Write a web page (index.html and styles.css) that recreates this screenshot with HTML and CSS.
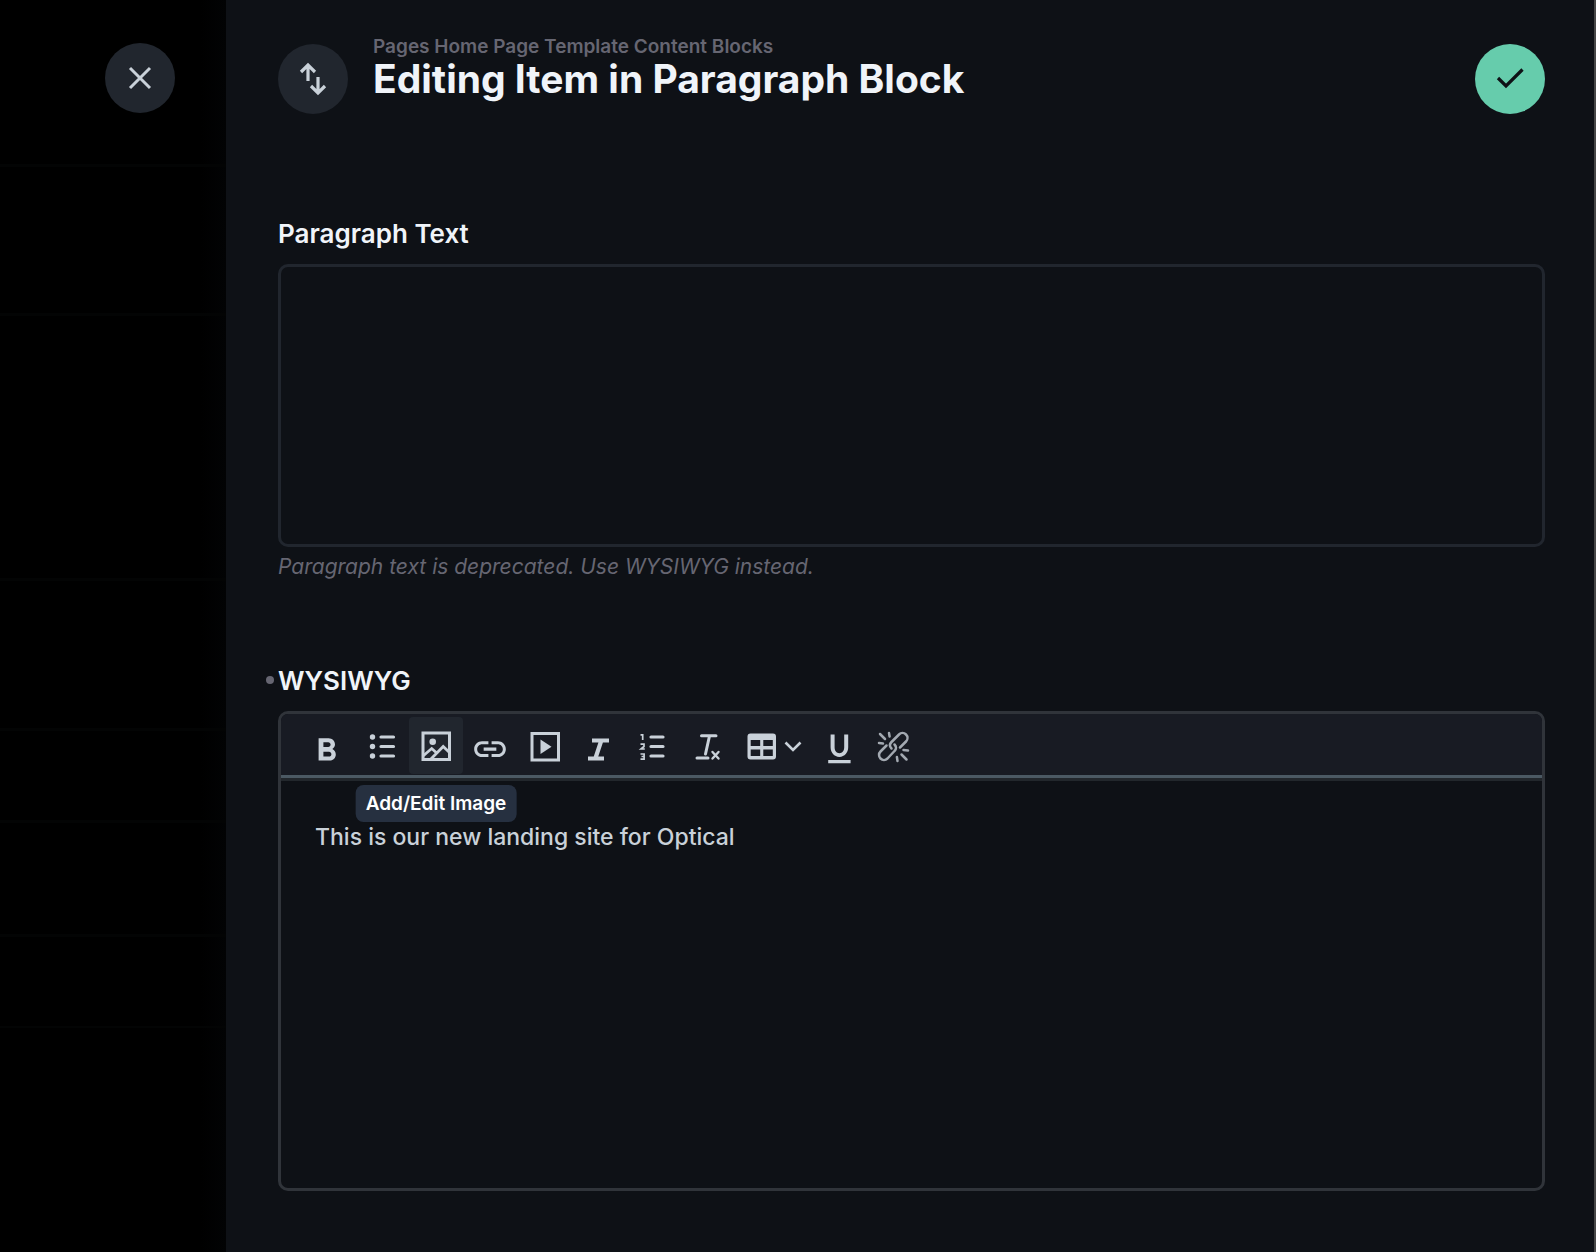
FILE: index.html
```html
<!DOCTYPE html>
<html lang="en">
<head>
<meta charset="utf-8">
<title>Editing Item in Paragraph Block</title>
<link rel="stylesheet" href="styles.css">
</head>
<body>
<div class="app">
  <aside class="backdrop">
    <button class="round" type="button" aria-label="Close">
      <svg width="36" height="36" viewBox="0 0 36 36" fill="none" stroke="currentColor" stroke-width="3"><path d="M8 8l20 20M28 8L8 28"/></svg>
    </button>
    <div class="rows">
      <div class="row row-1"></div>
      <div class="row row-2"></div>
      <div class="row row-3"></div>
      <div class="row row-4"></div>
      <div class="row row-5"></div>
      <div class="row row-6"></div>
    </div>
  </aside>
  <main class="drawer">
    <header class="header">
      <button class="round" type="button" aria-label="Import and export">
        <svg width="36" height="36" viewBox="0 0 36 36" fill="none" stroke="currentColor" stroke-width="3.200"><path d="M13 20V4.500M6 11l7-7 7 7M23 16v15.500M16 25l7 7 7-7"/></svg>
      </button>
      <div class="titles">
        <p class="crumbs">Pages Home Page Template Content Blocks</p>
        <h1 class="title">Editing Item in Paragraph Block</h1>
      </div>
      <button class="round save" type="button" aria-label="Save">
        <svg width="36" height="36" viewBox="0 0 36 36" fill="none" stroke="currentColor" stroke-width="3.200"><path d="M6 17l8 8L30.500 8.500"/></svg>
      </button>
    </header>
    <form class="form">
      <div class="field">
        <label class="label" for="paragraph">Paragraph Text</label>
        <textarea class="textarea" id="paragraph"></textarea>
        <p class="hint">Paragraph text is deprecated. Use WYSIWYG instead.</p>
      </div>
      <div class="field">
        <label class="label edited" for="wysiwyg">WYSIWYG</label>
        <div class="editor">
          <div class="toolbar">
            <button class="tool" type="button" aria-label="Bold"><svg width="36" height="36" viewBox="0 0 36 36" fill="currentColor"><path transform="translate(-2.600 2.200) scale(1.600)" d="M15.600 11.790c.97-.67 1.650-1.770 1.650-2.790 0-2.260-1.750-4-4-4H7v14h7.040c2.090 0 3.710-1.700 3.710-3.790 0-1.520-.86-2.820-2.150-3.420zM10 7.500h3c.83 0 1.500.67 1.500 1.500s-.67 1.500-1.500 1.500h-3v-3zm3.500 9H10v-3h3.500c.83 0 1.500.67 1.500 1.500s-.67 1.500-1.500 1.500z"/></svg></button>
            <button class="tool" type="button" aria-label="Bullet list"><svg width="36" height="36" viewBox="0 0 36 36" fill="currentColor"><circle cx="8.500" cy="9" r="2.700"/><circle cx="8.500" cy="18.500" r="2.700"/><circle cx="8.500" cy="28" r="2.700"/><path d="M17 9h12.500M17 18.500h12.500M17 28h12.500" stroke="currentColor" stroke-width="3.200" stroke-linecap="round"/></svg></button>
            <button class="tool active" type="button" aria-label="Add/Edit Image"><svg width="36" height="36" viewBox="0 0 36 36" fill="none" stroke="currentColor" stroke-width="3"><path d="M5 5h26.500v26.500H5z"/><path d="M5 28l8.700-7.500 5 4.500M12 32l13.200-13.500L32 25" stroke-width="2.800"/><circle cx="14.700" cy="13.800" r="3.300" fill="currentColor" stroke="none"/></svg><span class="tooltip" role="tooltip">Add/Edit Image</span></button>
            <button class="tool" type="button" aria-label="Link"><svg width="38" height="38" viewBox="0 -2 24 24" fill="currentColor"><path d="M3.900 12c0-1.710 1.390-3.100 3.100-3.100h4V7H7c-2.760 0-5 2.240-5 5s2.240 5 5 5h4v-1.900H7c-1.710 0-3.100-1.390-3.100-3.100zM8 13h8v-2H8v2zm9-6h-4v1.900h4c1.710 0 3.100 1.390 3.100 3.100s-1.390 3.100-3.100 3.100h-4V17h4c2.760 0 5-2.240 5-5s-2.240-5-5-5z"/></svg></button>
            <button class="tool" type="button" aria-label="Media"><svg width="36" height="36" viewBox="0 0 36 36" fill="none" stroke="currentColor" stroke-width="3"><path d="M6 5.500h26.500V32H6z"/><path d="M14.500 11.500l11 7.250-11 7.250z" fill="currentColor" stroke="none"/></svg></button>
            <button class="tool" type="button" aria-label="Italic"><svg width="36" height="36" viewBox="0 0 36 36" fill="none" stroke="currentColor" stroke-width="4.200"><path d="M12 12.500h17M8 30.500h16M21.500 12l-6 18"/></svg></button>
            <button class="tool" type="button" aria-label="Numbered list"><svg width="36" height="36" viewBox="0 0 36 36" fill="none" stroke="currentColor"><path d="M17 9h12M17 18.500h12M17 28h12" stroke-width="3.200" stroke-linecap="round"/><path d="M6.500 6.800h2.200V12M6.500 16.200H10v2.300L7 21h3.800M6.500 26h3.600v5.200H6.500M7.500 28.500H10" stroke-width="1.700"/></svg></button>
            <button class="tool" type="button" aria-label="Clear formatting"><svg width="36" height="36" viewBox="0 0 36 36" fill="none" stroke="currentColor" stroke-linecap="round"><path d="M13.500 7.700h14.500M21.500 8l-4 18M9 30h11" stroke-width="3"/><path d="M24.500 24l6 6.500M30.500 24l-6 6.500" stroke-width="2.400"/></svg></button>
            <button class="tool wide" type="button" aria-label="Table"><svg width="36" height="36" viewBox="0 0 36 36" fill="currentColor" fill-rule="evenodd"><path d="M7.500 5.500h22.500a3 3 0 0 1 3 3v20a3 3 0 0 1-3 3h-22.500a3 3 0 0 1-3-3v-20a3 3 0 0 1 3-3zM7.700 12v6h9.500v-6zM20.300 12v6h9.500v-6zM7.700 21.500V28h9.500v-6.500zM20.300 21.500V28h9.500v-6.500z"/></svg><svg width="20" height="20" viewBox="0 0 20 20" fill="none" stroke="currentColor" stroke-width="2.600"><path d="M2.500 6.500L10 14l7.500-7.500"/></svg></button>
            <button class="tool" type="button" aria-label="Underline"><svg width="36" height="36" viewBox="0 0 36 36" fill="currentColor"><path transform="translate(-.8 1.700) scale(1.600)" d="M12 17c3.310 0 5.500-2.690 5.500-6V3H15v8c0 2.200-1.200 3.700-3 3.700S9 13.200 9 11V3H6.500v8c0 3.310 2.190 6 5.500 6zm-7 2v2h14v-2H5z"/></svg></button>
            <button class="tool dim" type="button" aria-label="Remove link"><svg width="36" height="36" viewBox="0 0 36 36" fill="none" stroke="currentColor" stroke-width="2.500" stroke-linecap="round"><path d="M16.500 20.500c-2-2-2-4.500 0-6.500l7.500-7.500a4.900 4.900 0 0 1 7 7L25 19.500M19.500 16.500c2 2 2 4.500 0 6.500L12.500 30.500a4.900 4.900 0 0 1-7-7L11.500 17.500"/><path d="M5 6l5 5M14 5l.6 3.500M4 15l4 .6M31.500 31.500l-5-5M22.500 33l-.6-4M33 22.500l-4.500-.6"/></svg></button>
          </div>
          <textarea class="body" id="wysiwyg">This is our new landing site for Optical</textarea>
        </div>
      </div>
    </form>
  </main>
</div>
</body>
</html>
```
FILE: styles.css
```css
* {
  box-sizing: border-box;
}

body {
  margin: 0;
  background: #0e1116;
  font-family: Inter, "Liberation Sans", sans-serif;
  color: #f0f4f9;
}

svg {
  display: block;
  flex: none;
}

.app {
  display: grid;
  grid-template-columns: 226px 1fr;
  min-height: 100vh;
}

.backdrop {
  display: flex;
  flex-direction: column;
  background: linear-gradient(to left, #020304, #000 26px);
}

.backdrop .round {
  margin: 43px 51px 0 auto;
}

.rows {
  margin-top: 51px;
}

.row {
  border-top: 3px solid #030404;
}

.row-1 {
  height: 149px;
}

.row-2 {
  height: 265px;
}

.row-3 {
  height: 150px;
}

.row-4 {
  height: 92px;
}

.row-5 {
  height: 114px;
}

.row-6 {
  height: 94px;
  border-bottom: 2px solid #030404;
}

.drawer {
  padding: 36px 49px 61px 52px;
  border-right: 2px solid #464646;
}

.round {
  display: flex;
  flex: none;
  align-items: center;
  justify-content: center;
  width: 70px;
  height: 70px;
  padding: 0;
  border: 0;
  border-radius: 50%;
  background: #21262e;
  color: #c9d1d9;
}

.header {
  display: flex;
  gap: 25px;
}

.header .round {
  margin-top: 8px;
}

.header .save {
  margin-left: auto;
  background: #66ccac;
  color: #0e1116;
}

.crumbs {
  margin: 0;
  font-size: 19px;
  font-weight: 600;
  line-height: 22px;
  color: #666672;
}

.title {
  margin: 0;
  font-size: 39px;
  font-weight: 700;
  line-height: 42px;
}

.form {
  display: grid;
  gap: 84px;
  margin-top: 104px;
}

.field {
  display: flex;
  flex-direction: column;
}

.label {
  margin-bottom: 14px;
  font-size: 26px;
  font-weight: 600;
  line-height: 32px;
}

.edited {
  position: relative;
}

.edited::before {
  content: "";
  position: absolute;
  top: 11px;
  left: -12px;
  width: 8px;
  height: 8px;
  border-radius: 50%;
  background: #666672;
}

.textarea {
  height: 283px;
  padding: 20px;
  border: 3px solid #21262e;
  border-radius: 10px;
  background: transparent;
  color: inherit;
  font: inherit;
  resize: none;
}

.hint {
  margin: 6px 0 0;
  font-size: 21px;
  font-style: italic;
  font-weight: 400;
  line-height: 28px;
  color: #666672;
}

.editor {
  border: 3px solid #30343a;
  border-radius: 10px;
}

.toolbar {
  display: flex;
  padding: 3px 20px 1px;
  border-bottom: 3px solid #4b5963;
  border-radius: 7px 7px 0 0;
  background: #181b23;
}

.tool {
  display: flex;
  position: relative;
  align-items: center;
  justify-content: center;
  width: 54px;
  height: 57px;
  padding: 0;
  border: 0;
  border-radius: 4px;
  background: transparent;
  color: #c9d1d9;
}

.wide {
  gap: 4px;
  width: 79px;
}

.active {
  background: #21262e;
}

.dim {
  color: #a3a9b1;
}

.tooltip {
  position: absolute;
  top: 68px;
  left: 50%;
  z-index: 1;
  padding: 6px 10px;
  border-radius: 8px;
  background: #263040;
  color: #fff;
  font: 600 19px/25px Inter, sans-serif;
  white-space: nowrap;
  transform: translateX(-50%);
}

.body {
  display: block;
  width: 100%;
  height: 410px;
  padding: 41px 34px;
  border: 0;
  border-top: 3px solid #22272c;
  background: transparent;
  color: #c9d1d9;
  font: 500 23px/30px Inter, sans-serif;
  resize: none;
}
```
